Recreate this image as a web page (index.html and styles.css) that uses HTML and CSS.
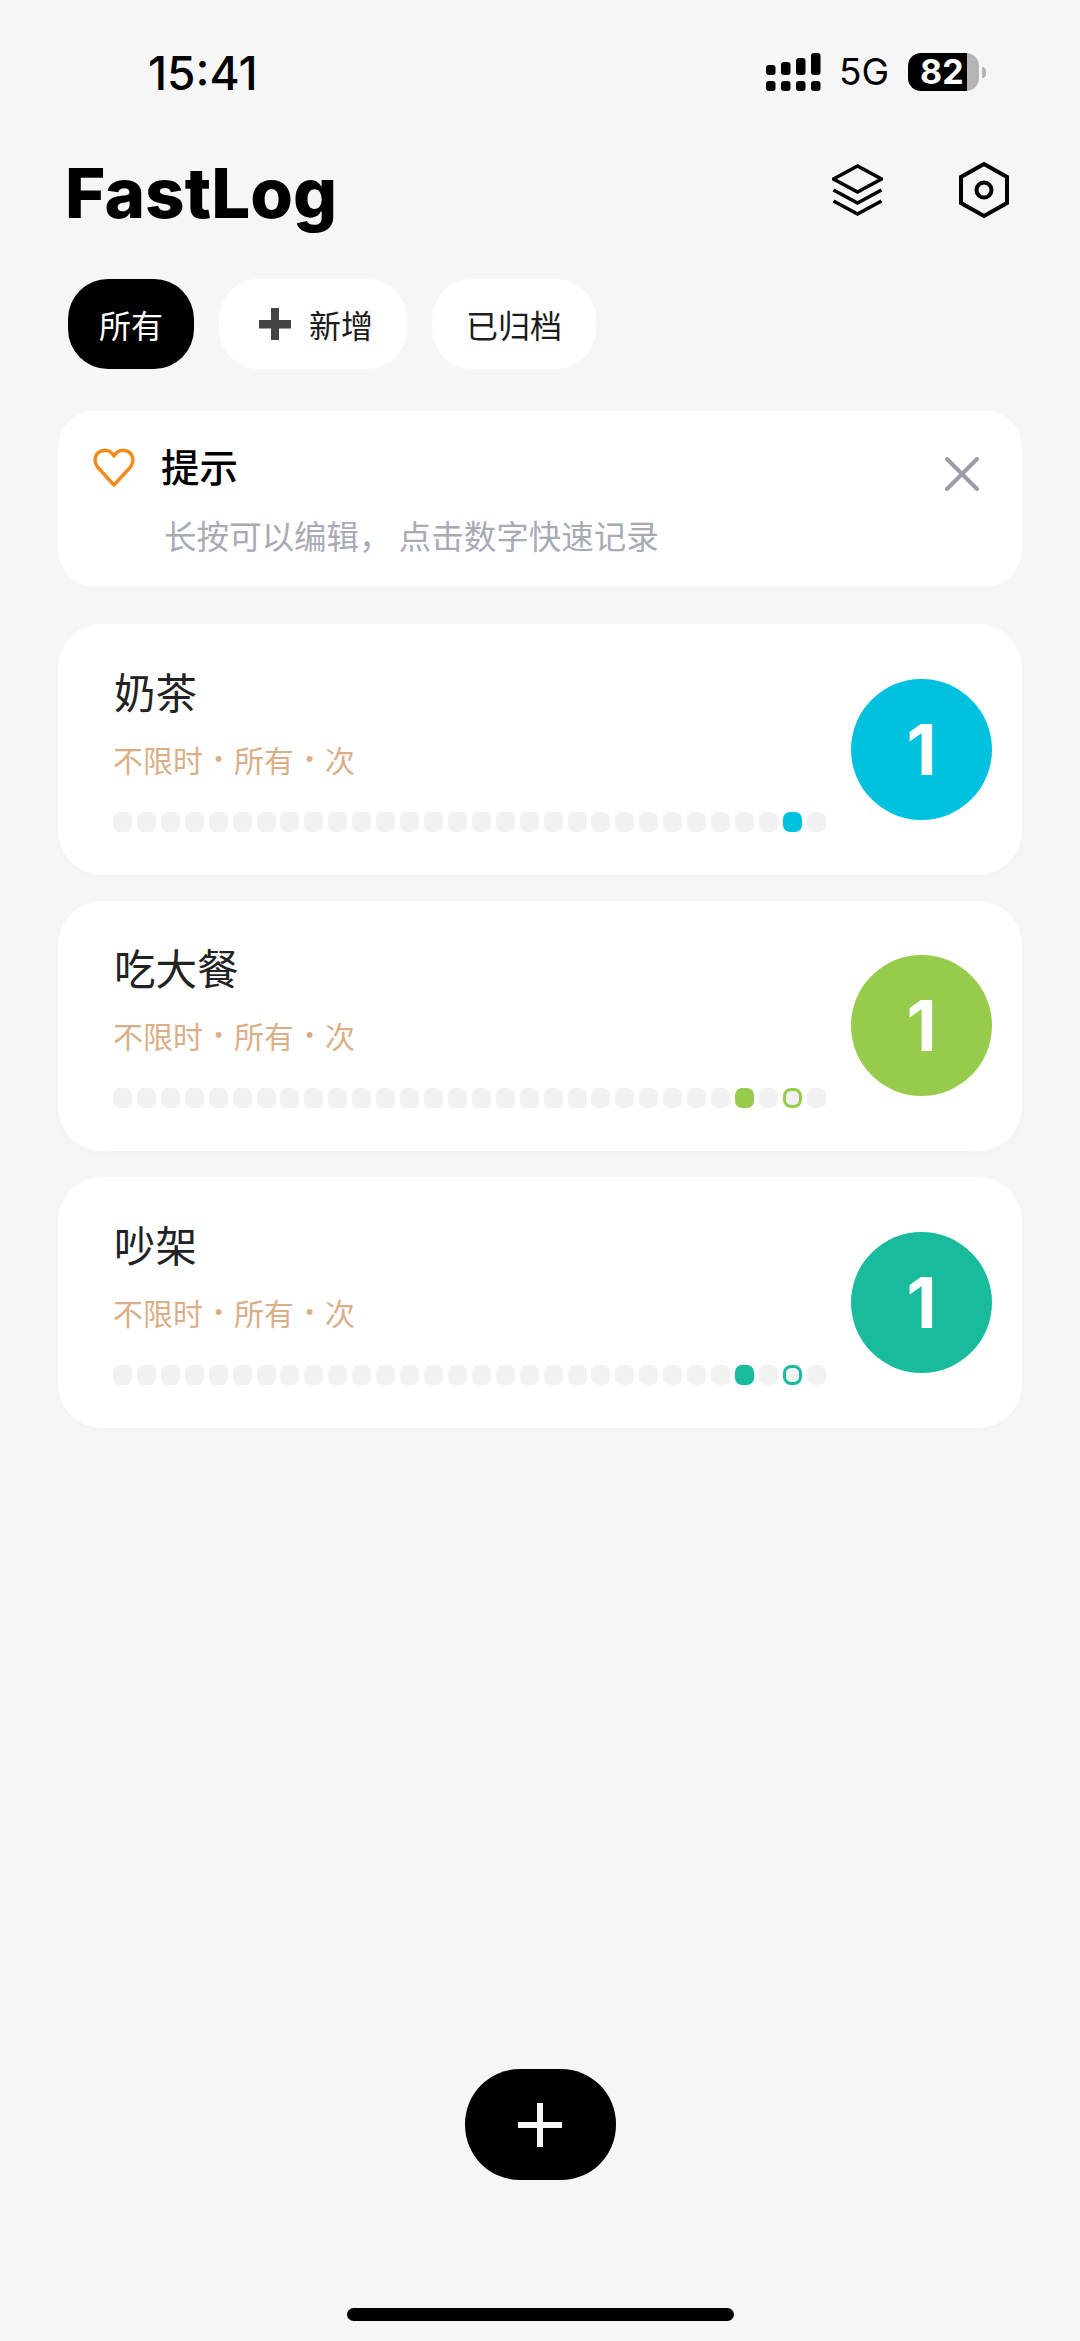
FILE: index.html
```html
<!DOCTYPE html>
<html lang="zh-CN">
<head>
    <meta charset="UTF-8">
    <meta name="viewport" content="width=device-width, initial-scale=1.0">
    <title>FastLog</title>
    <link rel="stylesheet" href="styles.css">
</head>
<body>
<div class="screen">
    <div class="status">
        <div class="status_time">15:41</div>
        <div class="status_right">
            <svg class="signal" width="55" height="38" viewBox="0 0 55 38">
                <rect x="0" y="12" width="9.5" height="10" rx="3"/>
                <rect x="15" y="9" width="9.5" height="13" rx="3"/>
                <rect x="30" y="5" width="9.5" height="17" rx="3"/>
                <rect x="45" y="0" width="9.5" height="22" rx="3"/>
                <rect x="0" y="28" width="9.5" height="10" rx="3"/>
                <rect x="15" y="28" width="9.5" height="10" rx="3"/>
                <rect x="30" y="28" width="9.5" height="10" rx="3"/>
                <rect x="45" y="28" width="9.5" height="10" rx="3"/>
            </svg>
            <div class="status_net">5G</div>
            <div class="battery">
                <div class="battery_body">82</div>
                <div class="battery_cap"></div>
            </div>
        </div>
    </div>

    <div class="head">
        <h1 class="head_title">FastLog</h1>
        <div class="head_icons">
            <svg class="icon" width="51" height="52" viewBox="0 0 51 52">
                <path d="M1.5 15 L25.500 2 L49.500 15 L25.500 28 Z"/>
                <path d="M1.5 26 L25.500 39 L49.500 26"/>
                <path d="M1.5 37 L25.500 50 L49.500 37"/>
            </svg>
            <svg class="icon icon_hex" width="50" height="56" viewBox="0 0 50 56">
                <path d="M25 2 L48 15 L48 41 L25 54 L2 41 L2 15 Z"/>
                <circle cx="25" cy="28" r="7.500"/>
            </svg>
        </div>
    </div>

    <div class="tabs">
        <div class="tab tab_active">所有</div>
        <div class="tab tab_add">
            <svg width="32" height="32" viewBox="0 0 32 32">
                <path class="tab_plus" d="M12 0 H20 V12 H32 V20.500 H20 V32 H12 V20.500 H0 V12 H12 Z"/>
            </svg>
            新增
        </div>
        <div class="tab">已归档</div>
    </div>

    <div class="tip">
        <svg class="tip_heart" width="42" height="40" viewBox="0 0 42 40">
            <path d="M21 37 L4.500 19 C0 13 2 4 10 2.500 C15 1.800 19 4.500 21 8 C23 4.500 27 1.800 32 2.500 C40 4 42 13 37.500 19 Z"/>
        </svg>
        <div class="tip_text">
            <div class="tip_title">提示</div>
            <div class="tip_sub">长按可以编辑， 点击数字快速记录</div>
        </div>
        <svg class="tip_close" width="34" height="34" viewBox="0 0 34 34">
            <path d="M2 2 L32 32 M32 2 L2 32"/>
        </svg>
    </div>

    <div class="list">
        <div class="card card_blue">
            <div class="card_body">
                <div class="card_title">奶茶</div>
                <div class="card_meta"><span>不限时</span><span class="card_sep">•</span><span>所有</span><span class="card_sep">•</span><span>次</span></div>
                <div class="dots">
                    <i></i><i></i><i></i><i></i><i></i><i></i><i></i><i></i><i></i><i></i>
                    <i></i><i></i><i></i><i></i><i></i><i></i><i></i><i></i><i></i><i></i>
                    <i></i><i></i><i></i><i></i><i></i><i></i><i></i><i></i><i class="on"></i><i></i>
                </div>
            </div>
            <div class="count">1</div>
        </div>
        <div class="card card_green">
            <div class="card_body">
                <div class="card_title">吃大餐</div>
                <div class="card_meta"><span>不限时</span><span class="card_sep">•</span><span>所有</span><span class="card_sep">•</span><span>次</span></div>
                <div class="dots">
                    <i></i><i></i><i></i><i></i><i></i><i></i><i></i><i></i><i></i><i></i>
                    <i></i><i></i><i></i><i></i><i></i><i></i><i></i><i></i><i></i><i></i>
                    <i></i><i></i><i></i><i></i><i></i><i></i><i class="on"></i><i></i><i class="ring"></i><i></i>
                </div>
            </div>
            <div class="count">1</div>
        </div>
        <div class="card card_teal">
            <div class="card_body">
                <div class="card_title">吵架</div>
                <div class="card_meta"><span>不限时</span><span class="card_sep">•</span><span>所有</span><span class="card_sep">•</span><span>次</span></div>
                <div class="dots">
                    <i></i><i></i><i></i><i></i><i></i><i></i><i></i><i></i><i></i><i></i>
                    <i></i><i></i><i></i><i></i><i></i><i></i><i></i><i></i><i></i><i></i>
                    <i></i><i></i><i></i><i></i><i></i><i></i><i class="on"></i><i></i><i class="ring"></i><i></i>
                </div>
            </div>
            <div class="count">1</div>
        </div>
    </div>

    <div class="fab">
        <svg width="44" height="44" viewBox="0 0 44 44">
            <path d="M19 0 H25 V19 H44 V25 H25 V44 H19 V25 H0 V19 H19 Z"/>
        </svg>
    </div>
    <div class="home_bar"></div>
</div>
</body>
</html>
```

FILE: styles.css
```css
* {
    box-sizing: border-box;
    margin: 0;
    padding: 0;
}
body {
    background: #F6F6F6;
    font-family: "Noto Sans CJK SC", "Noto Sans", sans-serif;
}
.screen {
    width: 1080px;
    height: 2341px;
    display: flex;
    flex-direction: column;
    overflow: hidden;
}
.status {
    display: flex;
    justify-content: space-between;
    align-items: center;
    height: 38px;
    margin-top: 53px;
    padding: 0 94px 0 148px;
}
.status_time {
    font-family: Inter, sans-serif;
    font-size: 46px;
    font-weight: 500;
    line-height: 38px;
    color: #000;
    padding-top: 2px;
}
.status_right {
    display: flex;
    align-items: center;
}
.signal {
    display: block;
    margin-right: 18px;
}
.status_net {
    font-family: Inter, sans-serif;
    font-size: 37px;
    font-weight: 400;
    line-height: 38px;
    color: #000;
    margin-right: 19px;
}
.battery {
    display: flex;
    align-items: center;
}
.battery_body {
    width: 71px;
    height: 38px;
    border-radius: 13px;
    background: linear-gradient(to right, #000 59px, #B4B4B4 59px);
    color: #fff;
    font-family: Inter, sans-serif;
    font-size: 34px;
    font-weight: 700;
    line-height: 38px;
    padding-left: 12px;
}
.battery_cap {
    width: 4px;
    height: 11px;
    margin-left: 3px;
    background: #B4B4B4;
    border-radius: 0 6px 6px 0;
}
.head {
    display: flex;
    justify-content: space-between;
    align-items: center;
    margin-top: 71px;
    height: 56px;
    padding: 0 71px 0 65px;
}
.head_title {
    font-family: Inter, sans-serif;
    font-size: 69px;
    font-weight: 800;
    line-height: 56px;
    color: #000;
    padding-top: 5px;
}
.head_icons {
    display: flex;
    align-items: center;
    gap: 76px;
}
.icon {
    display: block;
    fill: none;
    stroke: #000;
    stroke-width: 3.5;
    stroke-linejoin: miter;
}
.icon_hex {
    stroke-width: 4;
}
.tabs {
    display: flex;
    gap: 25px;
    margin-top: 61px;
    padding-left: 68px;
}
.tab {
    height: 90px;
    padding: 0 34px;
    border-radius: 40px;
    background: #fff;
    color: #1C1C1C;
    font-size: 32px;
    line-height: 90px;
}
.tab_active {
    background: #000;
    color: #fff;
    padding: 0 31px;
}
.tab_add {
    display: flex;
    align-items: center;
    gap: 18px;
    padding: 0 34px 0 40px;
}
.tab_plus {
    fill: #444;
}
.tip {
    display: flex;
    align-items: flex-start;
    height: 175px;
    margin: 42px 58px 0;
    padding: 37px 43px 0 35px;
    background: #fff;
    border-radius: 36px;
}
.tip_heart {
    flex: none;
    fill: none;
    stroke: #F28C1E;
    stroke-width: 3.5;
    stroke-linejoin: round;
}
.tip_text {
    flex: 1;
    padding-left: 26px;
}
.tip_title {
    margin-top: -3px;
    font-size: 38.5px;
    font-weight: 500;
    line-height: 40px;
    color: #000;
}
.tip_sub {
    margin: 30px 0 0 3px;
    font-size: 32.5px;
    line-height: 40px;
    color: #A8AAB6;
}
.tip_close {
    flex: none;
    margin-top: 9px;
    fill: none;
    stroke: #9A9DA8;
    stroke-width: 4;
    stroke-linecap: round;
}
.list {
    display: flex;
    flex-direction: column;
    gap: 26px;
    margin: 38px 58px 0;
}
.card {
    display: flex;
    justify-content: space-between;
    align-items: center;
    height: 250.5px;
    padding: 0 30px 0 55px;
    background: #fff;
    border-radius: 44px;
    box-shadow: 0 2px 12px #00000005;
}
.card_blue {
    --accent: #00C1DE;
}
.card_green {
    --accent: #96CB4B;
}
.card_teal {
    --accent: #18BC9C;
}
.card_body {
    width: 713px;
}
.card_title {
    margin-left: 1px;
    font-size: 41.5px;
    font-weight: 400;
    line-height: 48px;
    color: #222;
}
.card_meta {
    display: flex;
    align-items: center;
    margin-top: 24px;
    font-size: 30px;
    font-weight: 400;
    line-height: 40px;
    color: #DAAF88;
}
.card_sep {
    width: 31px;
    text-align: center;
    font-family: "Liberation Sans", sans-serif;
    font-size: 22px;
}
.dots {
    display: flex;
    justify-content: space-between;
    margin-top: 33px;
}
.dots i {
    display: block;
    width: 19px;
    height: 20px;
    border-radius: 7px;
    background: #F1F1F1;
}
.dots .on {
    background: var(--accent);
}
.dots .ring {
    border: 3px solid var(--accent);
    border-radius: 8px;
}
.count {
    width: 141px;
    height: 141px;
    border-radius: 50%;
    background: var(--accent);
    color: #fff;
    font-family: Inter, sans-serif;
    font-size: 70px;
    font-weight: 700;
    line-height: 141px;
    text-align: center;
}
.fab {
    display: flex;
    justify-content: center;
    align-items: center;
    width: 151px;
    height: 111px;
    margin: auto auto 0;
    border-radius: 55px;
    background: #000;
    fill: #F6F6F6;
}
.home_bar {
    width: 387px;
    height: 13px;
    margin: 128px auto 20px;
    border-radius: 7px;
    background: #000;
}
```
